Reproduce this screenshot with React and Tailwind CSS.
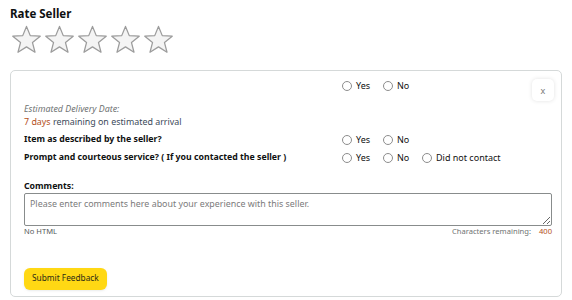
const Star = () => (
  <svg width="31" height="29" viewBox="0 0 32 30">
    <path
      d="M16 1.5 L19.9 11 L30.2 11.6 L22.2 18.2 L24.8 28.2 L16 22.6 L7.2 28.2 L9.8 18.2 L1.8 11.6 L12.1 11 Z"
      fill="#f4f4f4"
      stroke="#9c9c9c"
      strokeWidth="1.3"
      strokeLinejoin="round"
    />
  </svg>
);

const Radio = ({ label, className = "" }) => (
  <label className={`flex items-center gap-[4px] ${className}`}>
    <span className="w-[10px] h-[10px] rounded-full border border-[#8d8d8d] bg-white" />
    <span className="text-[#111]">{label}</span>
  </label>
);

const YesNo = ({ extra }) => (
  <div className="flex items-center text-[9px]">
    <Radio label="Yes" className="w-[41px]" />
    <Radio label="No" className="w-[39px]" />
    {extra && <Radio label={extra} />}
  </div>
);

export default function App() {
  return (
    <div
      className="w-[572px] h-[300px] bg-white text-[#0f1111] overflow-hidden"
      style={{ fontFamily: "'Noto Sans', 'Liberation Sans', sans-serif" }}
    >
      <div className="pl-[10px] pt-[6px]">
        <h2 className="text-[11.5px] font-bold leading-[16px]">Rate Seller</h2>
        <div className="flex gap-[2px] mt-[3px] ml-[1px]">
          <Star />
          <Star />
          <Star />
          <Star />
          <Star />
        </div>
      </div>

      <div className="mx-[10px] mt-[16px] h-[227px] border border-[#d5d9d9] rounded-[5px] px-[13px] relative">
        <div className="flex pt-[8px]">
          <div className="w-[318px]" />
          <YesNo />
        </div>
        <button className="absolute right-[7px] top-[8px] w-[22px] h-[22px] rounded-[5px] bg-white shadow-[0_0_4px_rgba(0,0,0,0.12)] text-[9px] text-[#777] leading-none">
          x
        </button>

        <div className="mt-[9px] text-[8.9px] leading-[13px]">
          <div className="italic text-[#6f7373]">Estimated Delivery Date:</div>
          <div className="text-[#3b4a5a]">
            <span className="text-[#b4501b]">7 days</span> remaining on estimated arrival
          </div>
        </div>

        <div className="flex items-center mt-[4px] h-[16px] text-[8.75px]">
          <div className="w-[318px] font-bold">Item as described by the seller?</div>
          <YesNo />
        </div>
        <div className="flex items-center mt-[2px] h-[16px] text-[8.75px]">
          <div className="w-[318px] font-bold">Prompt and courteous service? ( If you contacted the seller )</div>
          <YesNo extra="Did not contact" />
        </div>

        <div className="mt-[14px] text-[8.75px] font-bold leading-[13px]">Comments:</div>
        <textarea
          className="block w-[528px] h-[33px] mt-[0px] border border-[#888c8c] rounded-[2px] px-[5px] py-[3px] text-[8.9px] leading-[13px] placeholder:text-[#7b7b7b] resize-y"
          placeholder="Please enter comments here about your experience with this seller."
        />
        <div className="flex justify-between w-[528px] text-[7.6px] leading-[11px] text-[#565959]">
          <span>No HTML</span>
          <span className="text-[#6f7373]">
            Characters remaining: <span className="ml-[6px] text-[#b4501b]">400</span>
          </span>
        </div>

        <button className="mt-[31px] h-[22px] px-[8px] rounded-[6px] bg-[#ffd814] text-[8.3px] text-[#2b2b14] shadow-[0_1px_2px_rgba(213,217,217,0.5)]">
          Submit Feedback
        </button>
      </div>
    </div>
  );
}
